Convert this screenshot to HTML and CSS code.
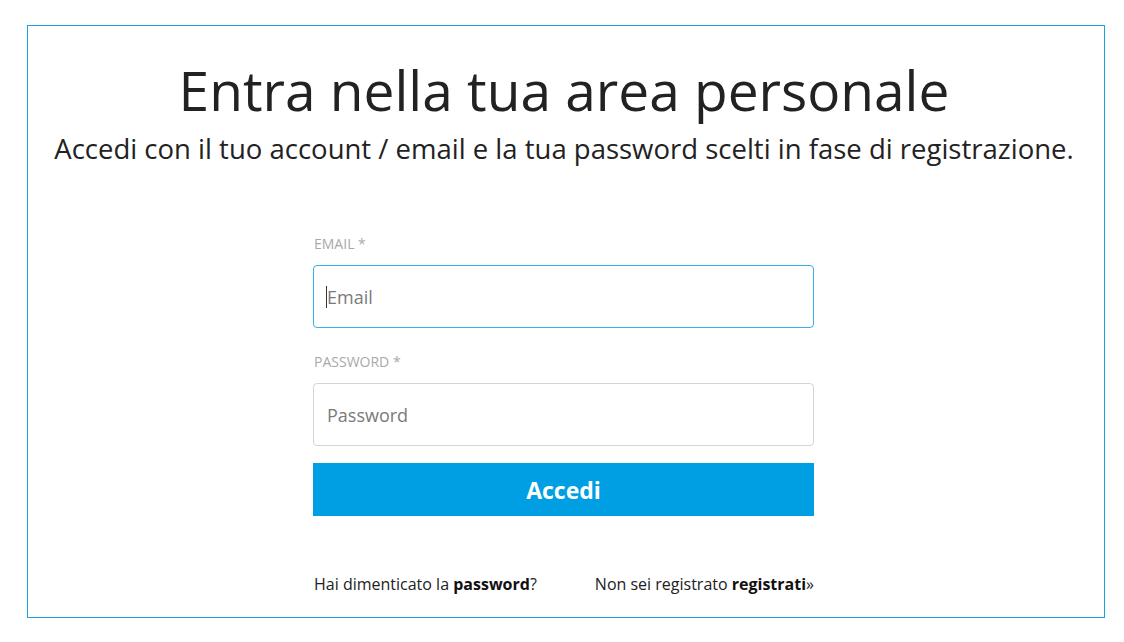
FILE: index.html
```html
<!DOCTYPE html>
<html lang="it">
<head>
<meta charset="utf-8">
<title>Entra nella tua area personale</title>
<link rel="stylesheet" href="styles.css">
</head>
<body>
<div class="panel">
  <h1 class="title">Entra nella tua area personale</h1>
  <p class="subtitle">Accedi con il tuo account / email e la tua password scelti in fase di registrazione.</p>
  <form class="form">
    <label class="label" for="email">EMAIL *</label>
    <div class="field field-focus"><span class="caret"></span><span class="placeholder">Email</span></div>
    <label class="label" for="password">PASSWORD *</label>
    <div class="field"><span class="placeholder">Password</span></div>
    <div class="button">Accedi</div>
    <div class="links">
      <span>Hai dimenticato la <b>password</b>?</span>
      <span>Non sei registrato <b>registrati</b>»</span>
    </div>
  </form>
</div>
</body>
</html>
```

FILE: styles.css
```css
html, body {
  margin: 0;
  padding: 0;
  background: #ffffff;
}
body {
  font-family: "Open Sans", "Liberation Sans", sans-serif;
  color: #222222;
  padding: 25px 19px 0 27px;
}
.panel {
  border: 1px solid #1aa3e0;
  height: 591px;
  padding-right: 4px;
  box-sizing: content-box;
  display: flex;
  flex-direction: column;
  align-items: center;
}
.title {
  margin: 32px 0 0 0;
  font-weight: 400;
  font-size: 55px;
  line-height: 64px;
  color: #222222;
}
.subtitle {
  margin: 9px 0 0 0;
  font-size: 27.5px;
  line-height: 36px;
}
.form {
  width: 501px;
  margin-top: 68px;
  margin-left: -1px;
  display: flex;
  flex-direction: column;
}
.label {
  font-size: 14px;
  line-height: 18px;
  color: #a9a9a9;
  margin-left: 1px;
  margin-bottom: 12px;
}
.field {
  height: 61px;
  border: 1px solid #d2d5d9;
  border-radius: 4px;
  display: flex;
  align-items: center;
  padding-left: 13px;
  margin-bottom: 25px;
}
.field-focus {
  border-color: #36b0ea;
}
.caret {
  width: 1px;
  height: 22px;
  background: #333333;
  margin-left: -1px;
}
.placeholder {
  font-size: 18px;
  color: #7a7a7a;
}
.button {
  margin-top: -8px;
  height: 53px;
  background: #009fe3;
  color: #ffffff;
  font-weight: 700;
  font-size: 23px;
  display: flex;
  align-items: center;
  justify-content: center;
}
.links {
  margin-top: 57px;
  display: flex;
  justify-content: space-between;
  font-size: 16px;
  line-height: 22px;
  color: #222222;
  padding-left: 1px;
}
.links b {
  font-weight: 700;
  color: #111111;
}
```
